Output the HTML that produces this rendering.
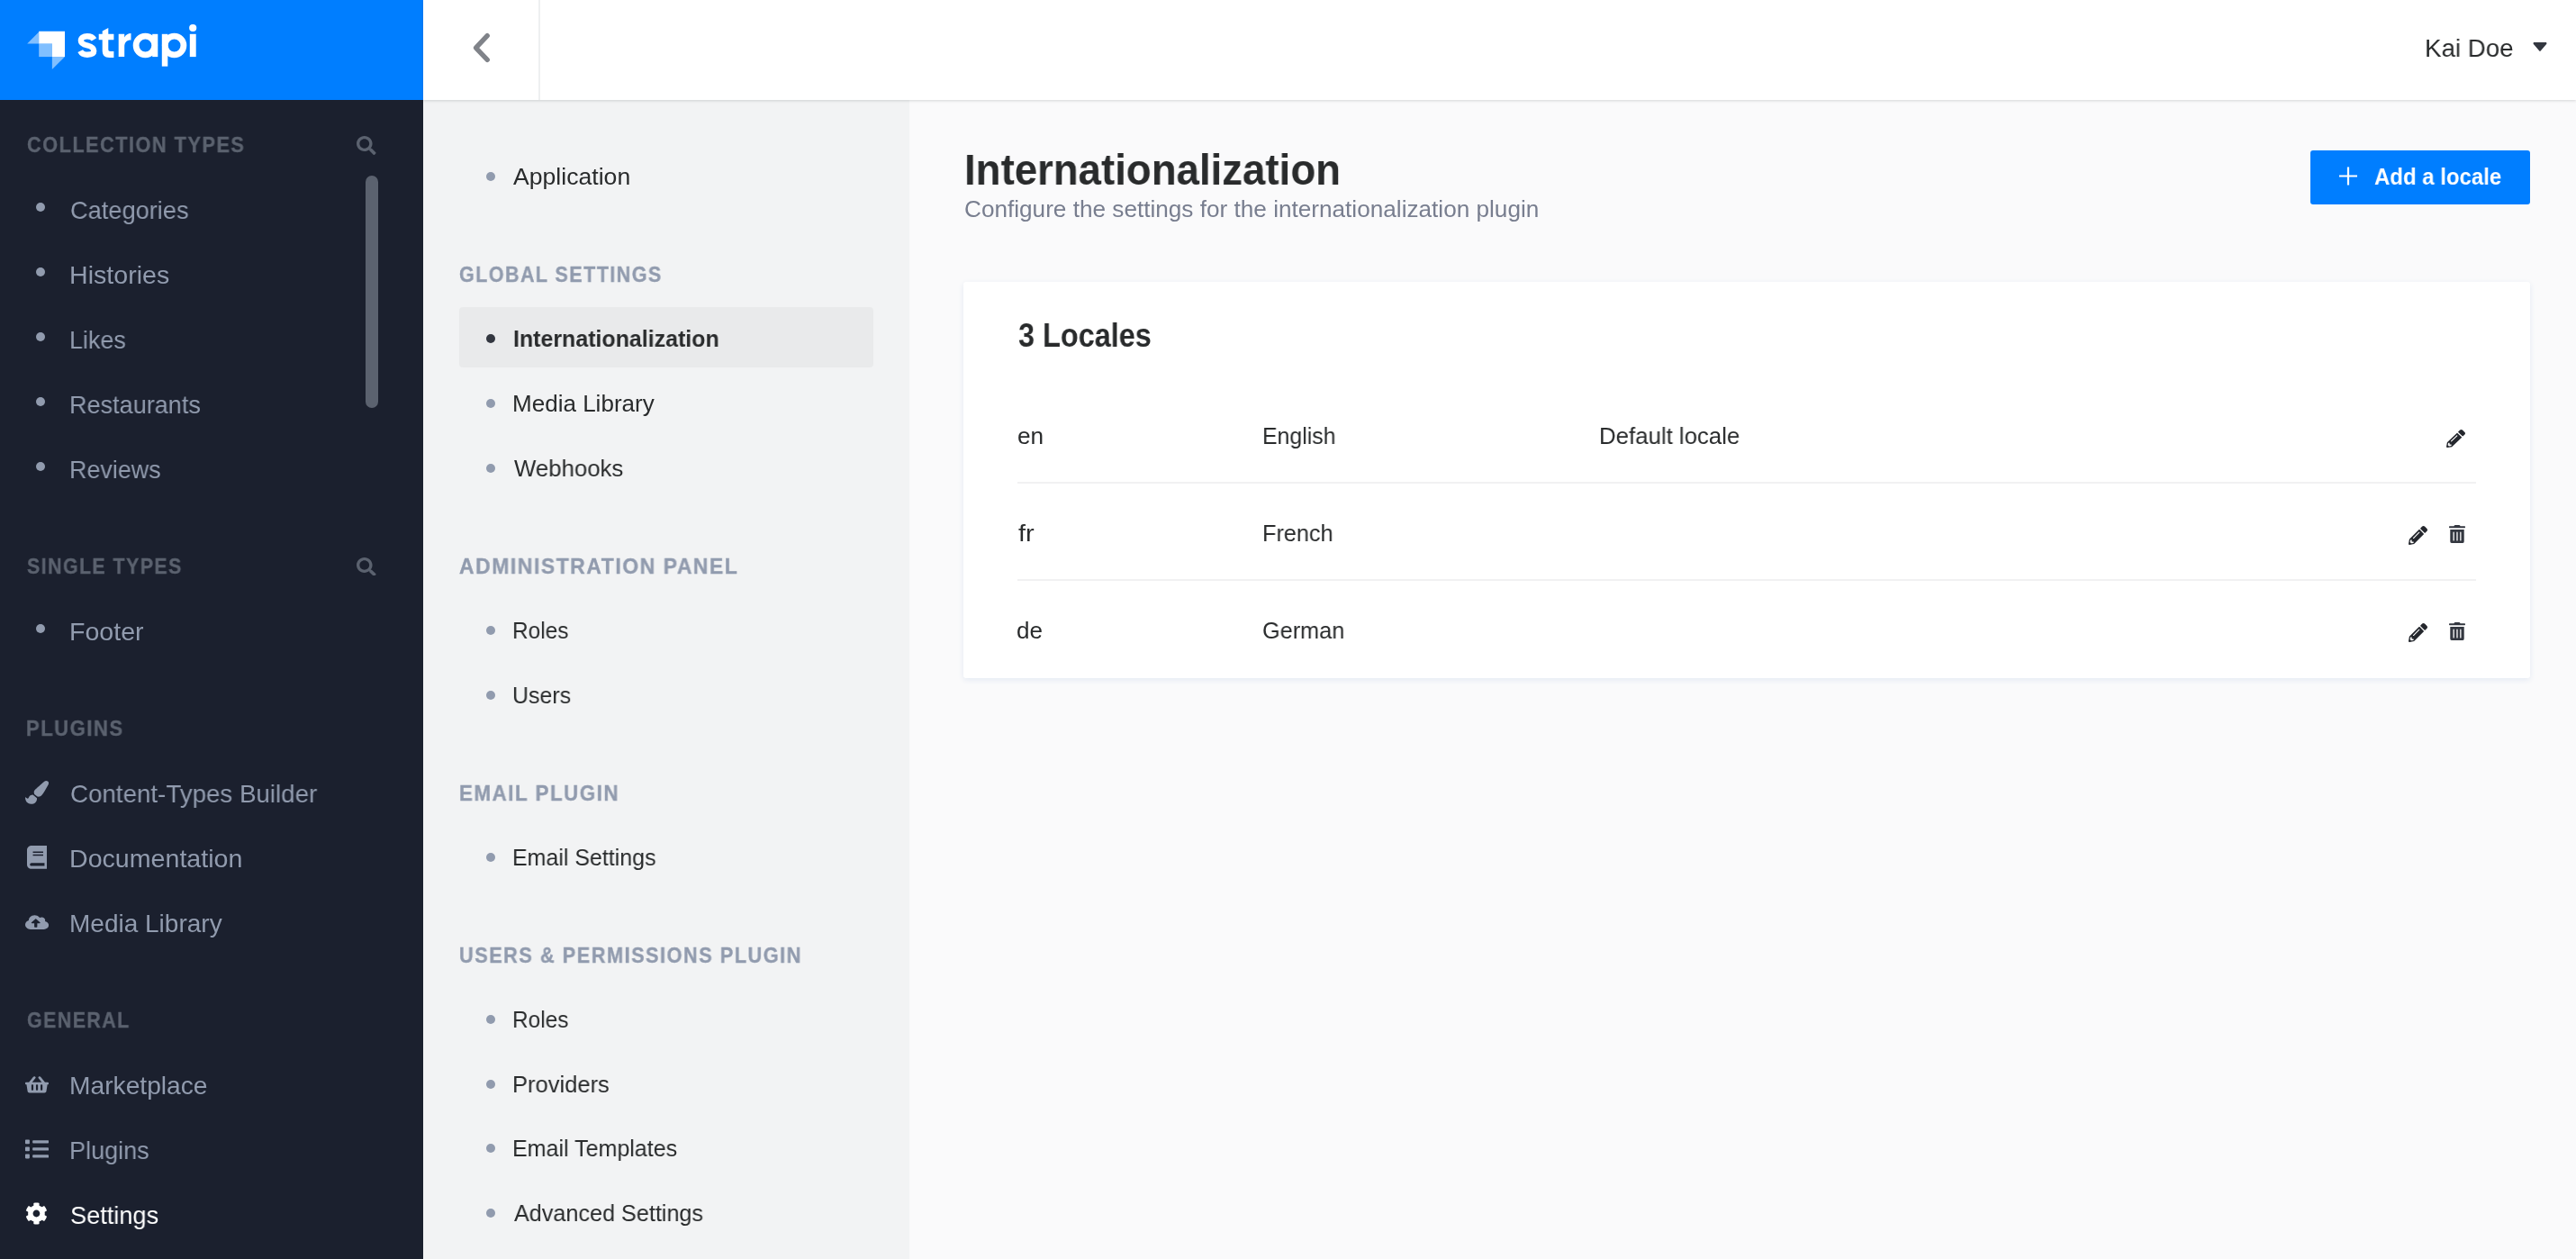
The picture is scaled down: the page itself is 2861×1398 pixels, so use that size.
<!DOCTYPE html>
<html><head><meta charset="utf-8"><title>Strapi - Internationalization</title>
<style>
html,body{margin:0;padding:0;}
body{width:2861px;height:1398px;overflow:hidden;position:relative;background:#fafafb;font-family:"Liberation Sans",sans-serif;}
.t{position:absolute;white-space:nowrap;line-height:1;transform-origin:0 0;will-change:transform;}
.hd{-webkit-text-stroke:0.35px currentColor;}
.abs{position:absolute;}
.dot{position:absolute;width:10px;height:10px;border-radius:50%;}
</style></head><body>
<div class="abs" style="left:0;top:0;width:470px;height:1398px;background:#1b202e"></div>
<div class="abs" style="left:0;top:0;width:470px;height:111px;background:#007eff"></div>
<div class="abs" style="left:470px;top:111px;width:540px;height:1287px;background:#f2f3f4"></div>
<div class="abs" style="left:470px;top:0;width:2391px;height:111px;background:#fff;box-shadow:0 1px 3px rgba(40,42,49,0.18)"></div>
<div class="abs" style="left:598px;top:0;width:1.5px;height:111px;background:#eef0f1"></div>

<svg class="abs" style="left:0;top:0" width="240" height="111" viewBox="0 0 240 111">
<polygon fill="#fff" fill-opacity="0.5" points="30.2,48.4 43.2,35.4 43.2,48.4"/>
<polygon fill="#fff" fill-opacity="0.5" points="43.2,48.4 57.9,48.4 57.9,63.1 43.2,63.1"/>
<polygon fill="#fff" fill-opacity="0.5" points="57.9,63.1 72,63.1 57.9,77"/>
<polygon fill="#fff" points="43.2,34.7 72,34.7 72,63.1 57.9,63.1 57.9,48.4 43.2,48.4"/>
<path fill="none" stroke="#fff" stroke-width="6.4" d="M104.5 43.8 C102.8 41 100 40.2 96.8 40.2 C92.6 40.2 89.9 42.2 89.9 45.2 C89.9 48.6 93.2 49.6 97.2 50.5 C101.6 51.5 104.2 53 104.2 56.6 C104.2 59.5 101.3 60.7 97 60.7 C93.4 60.7 90.6 59.4 89.2 56.6"/>
<path fill="#fff" d="M113.7 34.6 L120.3 30.9 V37.8 H126.4 V44.3 H120.3 V54.5 C120.3 56.3 121 57 122.8 57 H126.4 V63.9 H121.5 C116 63.9 113.7 61.3 113.7 56 V44.3 H109.7 V37.8 H113.7 Z"/>
<path fill="#fff" d="M131.7 63.1 V37.8 H138.2 V41.5 C139.6 38.6 142.2 37 145.5 37 V44.6 C140.6 44.6 138.2 47.2 138.2 52 V63.1 Z"/>
<circle cx="161.4" cy="50.5" r="10.3" fill="none" stroke="#fff" stroke-width="6.8"/>
<rect x="169.2" y="37.8" width="6.1" height="25.3" fill="#fff"/>
<circle cx="193.6" cy="50.5" r="10.3" fill="none" stroke="#fff" stroke-width="6.8"/>
<rect x="179.8" y="37.8" width="6.5" height="35.9" fill="#fff"/>
<rect x="210.8" y="37.8" width="6.9" height="25.3" fill="#fff"/>
<circle cx="214.2" cy="31" r="4.1" fill="#fff"/>
</svg>
<div class="dot" style="left:40px;top:225.1px;background:#919bae"></div>
<div class="dot" style="left:40px;top:296.9px;background:#919bae"></div>
<div class="dot" style="left:40px;top:369.0px;background:#919bae"></div>
<div class="dot" style="left:40px;top:440.9px;background:#919bae"></div>
<div class="dot" style="left:40px;top:513.0px;background:#919bae"></div>
<div class="dot" style="left:40px;top:693.0px;background:#919bae"></div>
<svg style="position:absolute;left:396px;top:151px;width:21.60px;height:21.00px" viewBox="0 0 512 512" preserveAspectRatio="none"><path fill="#5b626f" d="M505 442.7L405.3 343c-4.5-4.5-10.6-7-17-7H372c27.6-35.3 44-79.7 44-128C416 93.1 322.9 0 208 0S0 93.1 0 208s93.1 208 208 208c48.3 0 92.7-16.4 128-44v16.3c0 6.4 2.5 12.5 7 17l99.7 99.7c9.4 9.4 24.6 9.4 33.9 0l28.3-28.3c9.4-9.4 9.4-24.6.1-34zM208 336c-70.7 0-128-57.2-128-128 0-70.7 57.2-128 128-128 70.7 0 128 57.2 128 128 0 70.7-57.2 128-128 128z"/></svg>
<svg style="position:absolute;left:396px;top:618.5px;width:21.60px;height:20.80px" viewBox="0 0 512 512" preserveAspectRatio="none"><path fill="#5b626f" d="M505 442.7L405.3 343c-4.5-4.5-10.6-7-17-7H372c27.6-35.3 44-79.7 44-128C416 93.1 322.9 0 208 0S0 93.1 0 208s93.1 208 208 208c48.3 0 92.7-16.4 128-44v16.3c0 6.4 2.5 12.5 7 17l99.7 99.7c9.4 9.4 24.6 9.4 33.9 0l28.3-28.3c9.4-9.4 9.4-24.6.1-34zM208 336c-70.7 0-128-57.2-128-128 0-70.7 57.2-128 128-128 70.7 0 128 57.2 128 128 0 70.7-57.2 128-128 128z"/></svg>
<svg style="position:absolute;left:27.9px;top:867.2px;width:26.10px;height:25.80px" viewBox="0 0 512 512" preserveAspectRatio="none"><path fill="#919bae" d="M167.02 309.34c-40.12 2.58-76.53 17.860-97.19 72.3-2.35 6.21-8 9.98-14.59 9.98-11.11 0-45.46-27.67-55.25-34.35C0 439.62 37.93 512 128 512c75.86 0 128-43.77 128-120.19 0-3.11-.65-6.08-.97-9.13l-88.01-73.34zM457.89 0c-15.16 0-29.37 6.71-40.21 16.45C213.27 199.05 192 203.34 192 257.09c0 13.7 3.25 26.76 8.73 38.7l63.82 53.18c7.21 1.8 14.64 3.03 22.39 3.03 62.11 0 98.11-45.47 211.16-256.46 7.38-14.35 13.9-29.85 13.9-45.99C512 20.64 486 0 457.89 0z"/></svg>
<svg style="position:absolute;left:29.6px;top:939px;width:22.90px;height:25.80px" viewBox="0 0 448 512" preserveAspectRatio="none"><path fill="#919bae" d="M448 360V24c0-13.3-10.7-24-24-24H96C43 0 0 43 0 96v320c0 53 43 96 96 96h328c13.3 0 24-10.7 24-24v-16c0-7.5-3.5-14.3-8.9-18.7-4.2-15.4-4.200-59.3 0-74.7 5.4-4.3 8.9-11.1 8.9-18.6zM128 134c0-3.3 2.7-6 6-6h212c3.3 0 6 2.7 6 6v20c0 3.3-2.7 6-6 6H134c-3.3 0-6-2.7-6-6v-20zm0 64c0-3.3 2.7-6 6-6h212c3.3 0 6 2.7 6 6v20c0 3.3-2.7 6-6 6H134c-3.3 0-6-2.7-6-6v-20zm253.4 250H96c-17.7 0-32-14.3-32-32 0-17.6 14.4-32 32-32h285.4c-1.9 17.1-1.9 46.9 0 64z"/></svg>
<svg style="position:absolute;left:27.9px;top:1015px;width:26.10px;height:18.00px" viewBox="0 0 640 512" preserveAspectRatio="none"><path fill="#919bae" d="M537.6 226.6c4.1-10.7 6.4-22.4 6.4-34.6 0-53-43-96-96-96-19.7 0-38.1 6-53.3 16.2C367 64.2 315.3 32 256 32c-88.4 0-160 71.6-160 160 0 2.7.1 5.4.2 8.1C40.2 219.8 0 273.2 0 336c0 79.5 64.5 144 144 144h368c70.7 0 128-57.3 128-128 0-61.9-44-113.6-102.4-125.4zM393.4 288H328v112c0 8.8-7.2 16-16 16h-48c-8.8 0-16-7.200-16-16V288h-65.4c-14.3 0-21.4-17.2-11.3-27.3l105.4-105.4c6.2-6.2 16.4-6.2 22.6 0l105.4 105.4c10.1 10.1 2.9 27.3-11.3 27.3z"/></svg>
<svg style="position:absolute;left:27.9px;top:1193.5px;width:26.10px;height:20.70px" viewBox="0 0 576 512" preserveAspectRatio="none"><path fill="#919bae" d="M576 216v16c0 13.255-10.745 24-24 24h-8l-26.113 182.788C514.509 462.435 494.257 480 470.37 480H105.63c-23.887 0-44.139-17.565-47.518-41.212L32 256h-8c-13.255 0-24-10.745-24-24v-16c0-13.255 10.745-24 24-24h67.341l106.78-146.821c10.395-14.292 30.407-17.453 44.701-7.058 14.293 10.395 17.453 30.408 7.058 44.701L170.477 192h235.046L326.12 82.821c-10.395-14.292-7.234-34.306 7.059-44.701 14.291-10.395 34.306-7.235 44.701 7.058L484.659 192H552c13.255 0 24 10.745 24 24zM312 392V280c0-13.255-10.745-24-24-24s-24 10.745-24 24v112c0 13.255 10.745 24 24 24s24-10.745 24-24zm112 0V280c0-13.255-10.745-24-24-24s-24 10.745-24 24v112c0 13.255 10.745 24 24 24s24-10.745 24-24zm-224 0V280c0-13.255-10.745-24-24-24s-24 10.745-24 24v112c0 13.255 10.745 24 24 24s24-10.745 24-24z"/></svg>
<svg style="position:absolute;left:27.9px;top:1262.8px;width:26.10px;height:25.80px" viewBox="0 0 512 512" preserveAspectRatio="none"><path fill="#919bae" d="M80 368H16a16 16 0 0 0-16 16v64a16 16 0 0 0 16 16h64a16 16 0 0 0 16-16v-64a16 16 0 0 0-16-16zm0-320H16A16 16 0 0 0 0 64v64a16 16 0 0 0 16 16h64a16 16 0 0 0 16-16V64a16 16 0 0 0-16-16zm0 160H16a16 16 0 0 0-16 16v64a16 16 0 0 0 16 16h64a16 16 0 0 0 16-16v-64a16 16 0 0 0-16-16zm416 176H176a16 16 0 0 0-16 16v32a16 16 0 0 0 16 16h320a16 16 0 0 0 16-16v-32a16 16 0 0 0-16-16zm0-320H176a16 16 0 0 0-16 16v32a16 16 0 0 0 16 16h320a16 16 0 0 0 16-16V80a16 16 0 0 0-16-16zm0 160H176a16 16 0 0 0-16 16v32a16 16 0 0 0 16 16h320a16 16 0 0 0 16-16v-32a16 16 0 0 0-16-16z"/></svg>
<svg style="position:absolute;left:28.4px;top:1335px;width:24.90px;height:25.00px" viewBox="0 0 512 512" preserveAspectRatio="none"><path fill="#ffffff" d="M487.4 315.7l-42.6-24.6c4.3-23.2 4.3-47 0-70.2l42.6-24.6c4.9-2.8 7.1-8.6 5.5-14-11.1-35.6-30-67.8-54.7-94.6-3.8-4.1-10-5.1-14.8-2.3L380.8 110c-17.9-15.4-38.5-27.3-60.8-35.1V25.8c0-5.6-3.9-10.5-9.4-11.7-36.7-8.2-74.3-7.8-109.2 0-5.5 1.2-9.4 6.1-9.4 11.7V75c-22.2 7.9-42.8 19.8-60.8 35.1L88.7 85.5c-4.9-2.8-11-1.9-14.8 2.3-24.7 26.7-43.6 58.9-54.7 94.6-1.7 5.4.6 11.2 5.5 14L67.3 221c-4.3 23.2-4.3 47 0 70.2l-42.6 24.6c-4.9 2.8-7.100 8.6-5.5 14 11.1 35.6 30 67.8 54.7 94.6 3.8 4.1 10 5.1 14.8 2.3l42.6-24.6c17.9 15.4 38.5 27.3 60.8 35.1v49.2c0 5.6 3.9 10.5 9.4 11.7 36.7 8.2 74.3 7.8 109.2 0 5.5-1.2 9.4-6.1 9.4-11.7v-49.2c22.2-7.9 42.8-19.8 60.8-35.1l42.6 24.6c4.9 2.8 11 1.9 14.8-2.3 24.7-26.7 43.6-58.9 54.7-94.6 1.5-5.5-.7-11.3-5.6-14.1zM256 336c-44.1 0-80-35.9-80-80s35.9-80 80-80 80 35.9 80 80-35.9 80-80 80z"/></svg>
<div class="abs" style="left:406px;top:195px;width:14px;height:258px;border-radius:7px;background:#5b626f"></div>
<div class="abs" style="left:510px;top:341px;width:460px;height:67px;border-radius:4px;background:#e9eaeb"></div>
<div class="dot" style="left:540px;top:191.0px;background:#919bae"></div>
<div class="dot" style="left:540px;top:442.8px;background:#919bae"></div>
<div class="dot" style="left:540px;top:514.6px;background:#919bae"></div>
<div class="dot" style="left:540px;top:695.0px;background:#919bae"></div>
<div class="dot" style="left:540px;top:766.6px;background:#919bae"></div>
<div class="dot" style="left:540px;top:947.4px;background:#919bae"></div>
<div class="dot" style="left:540px;top:1126.7px;background:#919bae"></div>
<div class="dot" style="left:540px;top:1198.5px;background:#919bae"></div>
<div class="dot" style="left:540px;top:1270.3px;background:#919bae"></div>
<div class="dot" style="left:540px;top:1342.0px;background:#919bae"></div>
<div class="dot" style="left:540px;top:371.1px;background:#333740"></div>
<svg class="abs" style="left:515px;top:30px" width="40" height="48" viewBox="0 0 40 48"><polyline points="26.2,9.6 13.5,23.2 26.2,36.4" fill="none" stroke="#808389" stroke-width="5.4" stroke-linecap="round" stroke-linejoin="round"/></svg>
<svg style="position:absolute;left:2813px;top:47px;width:16.00px;height:10.00px" viewBox="0 192 320 170" preserveAspectRatio="none"><path fill="#333740" d="M31.3 192h257.3c17.8 0 26.7 21.5 14.1 34.1L174.1 354.8c-7.8 7.8-20.5 7.8-28.3 0L17.2 226.1C4.6 213.5 13.5 192 31.3 192z"/></svg>
<div class="abs" style="left:2566px;top:167px;width:244px;height:60px;border-radius:3px;background:#007eff"></div>
<svg class="abs" style="left:2597px;top:185px" width="22" height="21" viewBox="0 0 22 21"><path d="M11 0.5V20.5M1 10.5H21" stroke="#fff" stroke-width="2.2"/></svg>
<div class="abs" style="left:1070px;top:313px;width:1740px;height:440px;border-radius:3px;background:#fff;box-shadow:0 2px 6px #e3e9f3"></div>
<div class="abs" style="left:1130px;top:535px;width:1620px;height:2px;background:#f1f1f2"></div>
<div class="abs" style="left:1130px;top:643px;width:1620px;height:2px;background:#f1f1f2"></div>
<svg style="position:absolute;left:2717px;top:477px;width:21.00px;height:20.00px" viewBox="0 0 512 512" preserveAspectRatio="none"><path fill="#24272d" d="M497.9 142.1l-46.1 46.1c-4.7 4.7-12.3 4.7-17 0l-111-111c-4.7-4.7-4.7-12.3 0-17l46.1-46.1c18.7-18.7 49.1-18.7 67.9 0l60.1 60.1c18.8 18.7 18.8 49.1 0 67.9zM284.2 99.8L21.6 362.4.4 483.9c-2.9 16.4 11.4 30.6 27.8 27.8l121.5-21.3 262.6-262.6c4.7-4.7 4.7-12.3 0-17l-111-111c-4.8-4.7-12.4-4.7-17.1 0zM124.1 339.9c-5.5-5.5-5.5-14.3 0-19.8l154-154c5.5-5.5 14.3-5.5 19.8 0s5.5 14.3 0 19.8l-154 154c-5.5 5.5-14.3 5.5-19.8 0zM88 424h48v36.3l-64.5 11.3-31.1-31.1L51.7 376H88v48z"/></svg>
<svg style="position:absolute;left:2675px;top:584px;width:21.00px;height:21.00px" viewBox="0 0 512 512" preserveAspectRatio="none"><path fill="#24272d" d="M497.9 142.1l-46.1 46.1c-4.7 4.7-12.3 4.7-17 0l-111-111c-4.7-4.7-4.7-12.3 0-17l46.1-46.1c18.7-18.7 49.1-18.7 67.9 0l60.1 60.1c18.8 18.7 18.8 49.1 0 67.9zM284.2 99.8L21.6 362.4.4 483.9c-2.9 16.4 11.4 30.6 27.8 27.8l121.5-21.3 262.6-262.6c4.7-4.7 4.7-12.3 0-17l-111-111c-4.8-4.7-12.4-4.7-17.1 0zM124.1 339.9c-5.5-5.5-5.5-14.3 0-19.8l154-154c5.5-5.5 14.3-5.5 19.8 0s5.5 14.3 0 19.8l-154 154c-5.5 5.5-14.3 5.5-19.8 0zM88 424h48v36.3l-64.5 11.3-31.1-31.1L51.7 376H88v48z"/></svg>
<svg style="position:absolute;left:2720px;top:583px;width:18.00px;height:20.00px" viewBox="0 0 448 512" preserveAspectRatio="none"><path fill="#333740" d="M32 464a48 48 0 0 0 48 48h288a48 48 0 0 0 48-48V128H32zm272-256a16 16 0 0 1 32 0v224a16 16 0 0 1-32 0zm-96 0a16 16 0 0 1 32 0v224a16 16 0 0 1-32 0zm-96 0a16 16 0 0 1 32 0v224a16 16 0 0 1-32 0zM432 32H312l-9.4-18.7A24 24 0 0 0 281.1 0H166.8a23.72 23.72 0 0 0-21.4 13.3L136 32H16A16 16 0 0 0 0 48v16a16 16 0 0 0 16 16h416a16 16 0 0 0 16-16V48a16 16 0 0 0-16-16z"/></svg>
<svg style="position:absolute;left:2675px;top:692px;width:21.00px;height:21.00px" viewBox="0 0 512 512" preserveAspectRatio="none"><path fill="#24272d" d="M497.9 142.1l-46.1 46.1c-4.7 4.7-12.3 4.7-17 0l-111-111c-4.7-4.7-4.7-12.3 0-17l46.1-46.1c18.7-18.7 49.1-18.7 67.9 0l60.1 60.1c18.8 18.7 18.8 49.1 0 67.9zM284.2 99.8L21.6 362.4.4 483.9c-2.9 16.4 11.4 30.6 27.8 27.8l121.5-21.3 262.6-262.6c4.7-4.7 4.7-12.3 0-17l-111-111c-4.8-4.7-12.4-4.7-17.1 0zM124.1 339.9c-5.5-5.5-5.5-14.3 0-19.8l154-154c5.5-5.5 14.3-5.5 19.8 0s5.5 14.3 0 19.8l-154 154c-5.5 5.5-14.3 5.5-19.8 0zM88 424h48v36.3l-64.5 11.3-31.1-31.1L51.7 376H88v48z"/></svg>
<svg style="position:absolute;left:2720px;top:691px;width:18.00px;height:20.00px" viewBox="0 0 448 512" preserveAspectRatio="none"><path fill="#333740" d="M32 464a48 48 0 0 0 48 48h288a48 48 0 0 0 48-48V128H32zm272-256a16 16 0 0 1 32 0v224a16 16 0 0 1-32 0zm-96 0a16 16 0 0 1 32 0v224a16 16 0 0 1-32 0zm-96 0a16 16 0 0 1 32 0v224a16 16 0 0 1-32 0zM432 32H312l-9.4-18.7A24 24 0 0 0 281.1 0H166.8a23.72 23.72 0 0 0-21.4 13.3L136 32H16A16 16 0 0 0 0 48v16a16 16 0 0 0 16 16h416a16 16 0 0 0 16-16V48a16 16 0 0 0-16-16z"/></svg>
<div id="t_ct" class="t hd" style="left:29.50px;top:149.80px;font-size:23px;font-weight:700;color:#5b626f;letter-spacing:0.07em;transform:scaleX(0.9431);">COLLECTION TYPES</div>
<div id="t_cat" class="t" style="left:78.00px;top:220.10px;font-size:28px;font-weight:400;color:#919bae;transform:scaleX(0.9717);">Categories</div>
<div id="t_his" class="t" style="left:76.50px;top:291.90px;font-size:28px;font-weight:400;color:#919bae;transform:scaleX(1.0209);">Histories</div>
<div id="t_lik" class="t" style="left:77.00px;top:364.00px;font-size:28px;font-weight:400;color:#919bae;transform:scaleX(0.9625);">Likes</div>
<div id="t_res" class="t" style="left:77.00px;top:435.90px;font-size:28px;font-weight:400;color:#919bae;transform:scaleX(0.9662);">Restaurants</div>
<div id="t_rev" class="t" style="left:77.00px;top:508.00px;font-size:28px;font-weight:400;color:#919bae;transform:scaleX(0.9612);">Reviews</div>
<div id="t_st" class="t hd" style="left:29.50px;top:618.30px;font-size:23px;font-weight:700;color:#5b626f;letter-spacing:0.07em;transform:scaleX(0.9254);">SINGLE TYPES</div>
<div id="t_foo" class="t" style="left:77.00px;top:688.00px;font-size:28px;font-weight:400;color:#919bae;transform:scaleX(1.0204);">Footer</div>
<div id="t_plg" class="t hd" style="left:28.50px;top:797.80px;font-size:23px;font-weight:700;color:#5b626f;letter-spacing:0.07em;transform:scaleX(0.9579);">PLUGINS</div>
<div id="t_ctb" class="t" style="left:77.50px;top:867.80px;font-size:28px;font-weight:400;color:#919bae;transform:scaleX(0.9899);">Content-Types Builder</div>
<div id="t_doc" class="t" style="left:77.00px;top:939.70px;font-size:28px;font-weight:400;color:#919bae;transform:scaleX(1.0216);">Documentation</div>
<div id="t_med" class="t" style="left:77.00px;top:1011.50px;font-size:28px;font-weight:400;color:#919bae;transform:scaleX(0.9989);">Media Library</div>
<div id="t_gen" class="t hd" style="left:29.50px;top:1122.00px;font-size:23px;font-weight:700;color:#5b626f;letter-spacing:0.07em;transform:scaleX(0.9277);">GENERAL</div>
<div id="t_mkt" class="t" style="left:77.00px;top:1192.30px;font-size:28px;font-weight:400;color:#919bae;transform:scaleX(1.0067);">Marketplace</div>
<div id="t_plu" class="t" style="left:77.00px;top:1264.00px;font-size:28px;font-weight:400;color:#919bae;transform:scaleX(0.9663);">Plugins</div>
<div id="t_set" class="t" style="left:78.00px;top:1335.70px;font-size:28px;font-weight:400;color:#ffffff;transform:scaleX(0.9701);">Settings</div>
<div id="s_app" class="t" style="left:570.00px;top:183.00px;font-size:26px;font-weight:400;color:#292b2c;transform:scaleX(1.0239);">Application</div>
<div id="s_gs" class="t hd" style="left:509.50px;top:293.80px;font-size:23px;font-weight:700;color:#919bae;letter-spacing:0.07em;transform:scaleX(0.9319);">GLOBAL SETTINGS</div>
<div id="s_i18n" class="t" style="left:569.50px;top:363.10px;font-size:26px;font-weight:700;color:#292b2c;transform:scaleX(0.9596);">Internationalization</div>
<div id="s_ml" class="t" style="left:568.50px;top:434.80px;font-size:26px;font-weight:400;color:#292b2c;transform:scaleX(1.0013);">Media Library</div>
<div id="s_wh" class="t" style="left:570.50px;top:506.60px;font-size:26px;font-weight:400;color:#292b2c;transform:scaleX(0.9919);">Webhooks</div>
<div id="s_ap" class="t hd" style="left:509.50px;top:617.70px;font-size:23px;font-weight:700;color:#919bae;letter-spacing:0.07em;transform:scaleX(0.9935);">ADMINISTRATION PANEL</div>
<div id="s_ro" class="t" style="left:568.50px;top:687.00px;font-size:26px;font-weight:400;color:#292b2c;transform:scaleX(0.9395);">Roles</div>
<div id="s_us" class="t" style="left:568.50px;top:758.60px;font-size:26px;font-weight:400;color:#292b2c;transform:scaleX(0.9582);">Users</div>
<div id="s_ep" class="t hd" style="left:509.50px;top:870.20px;font-size:23px;font-weight:700;color:#919bae;letter-spacing:0.07em;transform:scaleX(0.9693);">EMAIL PLUGIN</div>
<div id="s_es" class="t" style="left:568.50px;top:939.40px;font-size:26px;font-weight:400;color:#292b2c;transform:scaleX(0.9598);">Email Settings</div>
<div id="s_up" class="t hd" style="left:509.50px;top:1049.90px;font-size:23px;font-weight:700;color:#919bae;letter-spacing:0.07em;transform:scaleX(0.9440);">USERS &amp; PERMISSIONS PLUGIN</div>
<div id="s_ro2" class="t" style="left:568.50px;top:1118.70px;font-size:26px;font-weight:400;color:#292b2c;transform:scaleX(0.9395);">Roles</div>
<div id="s_pr" class="t" style="left:568.50px;top:1190.50px;font-size:26px;font-weight:400;color:#292b2c;transform:scaleX(0.9816);">Providers</div>
<div id="s_et" class="t" style="left:568.50px;top:1262.30px;font-size:26px;font-weight:400;color:#292b2c;transform:scaleX(0.9628);">Email Templates</div>
<div id="s_as" class="t" style="left:570.50px;top:1334.00px;font-size:26px;font-weight:400;color:#292b2c;transform:scaleX(0.9687);">Advanced Settings</div>
<div id="m_title" class="t" style="left:1071.10px;top:164.80px;font-size:48px;font-weight:700;color:#292b2c;transform:scaleX(0.9499);">Internationalization</div>
<div id="m_sub" class="t" style="left:1070.50px;top:219.00px;font-size:26px;font-weight:400;color:#787e8f;transform:scaleX(1.0060);">Configure the settings for the internationalization plugin</div>
<div id="m_cnt" class="t" style="left:1130.50px;top:355.20px;font-size:36px;font-weight:700;color:#292b2c;transform:scaleX(0.9007);">3 Locales</div>
<div id="r_en" class="t" style="left:1129.80px;top:471.20px;font-size:26px;font-weight:400;color:#292b2c;transform:scaleX(1.0077);">en</div>
<div id="r_eng" class="t" style="left:1401.60px;top:471.20px;font-size:26px;font-weight:400;color:#292b2c;transform:scaleX(0.9562);">English</div>
<div id="r_def" class="t" style="left:1775.80px;top:471.00px;font-size:26px;font-weight:400;color:#292b2c;transform:scaleX(0.9923);">Default locale</div>
<div id="r_fr" class="t" style="left:1130.80px;top:578.90px;font-size:26px;font-weight:400;color:#292b2c;transform:scaleX(1.1159);">fr</div>
<div id="r_fre" class="t" style="left:1401.60px;top:578.90px;font-size:26px;font-weight:400;color:#292b2c;transform:scaleX(0.9704);">French</div>
<div id="r_de" class="t" style="left:1129.00px;top:687.00px;font-size:26px;font-weight:400;color:#292b2c;transform:scaleX(0.9860);">de</div>
<div id="r_ger" class="t" style="left:1401.50px;top:687.00px;font-size:26px;font-weight:400;color:#292b2c;transform:scaleX(0.9718);">German</div>
<div id="b_add" class="t" style="left:2636.50px;top:183.10px;font-size:26px;font-weight:700;color:#ffffff;transform:scaleX(0.9217);">Add a locale</div>
<div id="h_kai" class="t" style="left:2693.00px;top:40.00px;font-size:28px;font-weight:400;color:#292b2c;transform:scaleX(0.9897);">Kai Doe</div>
</body></html>
